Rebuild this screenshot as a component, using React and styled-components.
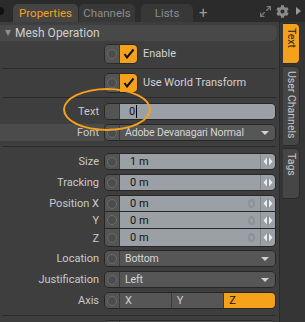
import React from "react"
import styled, { createGlobalStyle } from "styled-components"
import { Maximize2 } from "lucide-react"
import { FaCog } from "react-icons/fa"

const ORANGE = "#f4a11c"

const Global = createGlobalStyle`
  html, body {
    margin: 0;
    padding: 0;
    background: #3e3e3e;
    font-family: Roboto, "Liberation Sans", Arial, sans-serif;
    font-size: 11px;
  }
`

const Frame = styled.div`
  position: relative;
  width: 305px;
  height: 322px;
  overflow: hidden;
  display: flex;
  flex-direction: column;
  background: #3e3e3e;
`

const TabBar = styled.div`
  height: 22px;
  background: #2b2b2b;
  display: flex;
  align-items: flex-end;
  box-sizing: border-box;
  padding-right: 4px;
`

const Knob = styled.span`
  width: 8px;
  height: 8px;
  border-radius: 50%;
  background: #111;
  margin: 0 9px 7px -4px;
  align-self: flex-end;
`

const Tab = styled.div`
  width: ${({ $w }) => $w}px;
  height: 18px;
  box-sizing: border-box;
  margin-right: ${({ $gap }) => $gap}px;
  border-radius: 5px 5px 0 0;
  background: ${({ $active }) => ($active ? "#444444" : "#383838")};
  color: ${({ $active }) => ($active ? ORANGE : "#8c8c8c")};
  font-size: 11.5px;
  line-height: 18px;
  text-align: center;
  white-space: nowrap;
`

const Plus = styled.span`
  color: #9a9a9a;
  font-size: 15px;
  line-height: 18px;
  height: 18px;
  margin-left: 3px;
`

const Tools = styled.div`
  margin-left: auto;
  display: flex;
  align-items: center;
  gap: 4px;
  height: 22px;
  color: #8a8a8a;
`

const Arrow = styled.span`
  width: 0;
  height: 0;
  border-left: 5px solid #9a9a9a;
  border-top: 4px solid transparent;
  border-bottom: 4px solid transparent;
  margin-left: 3px;
`

const Body = styled.div`
  flex: 1;
  display: flex;
`

const Content = styled.div`
  position: relative;
  width: 279px;
  display: flex;
  flex-direction: column;
  background: #3e3e3e;
`

const Header = styled.div`
  margin: 3px 2px 0 0;
  height: 16px;
  background: #484848;
  border-radius: 0 6px 6px 0;
  display: flex;
  align-items: center;
  color: #cfcfcf;
  font-size: 12px;
`

const Tri = styled.span`
  width: 0;
  height: 0;
  border-top: 6px solid #8e8e8e;
  border-left: 3px solid transparent;
  border-right: 3px solid transparent;
  margin: 0 4px 0 5px;
`

const Rule = styled.div`
  height: 1px;
  background: #2a2a2a;
  margin: ${({ $m }) => $m};
  margin-left: 3px;
  margin-right: 3px;
`

const Row = styled.div`
  display: flex;
  align-items: center;
  height: ${({ $h }) => $h || 17}px;
  margin-top: ${({ $mt }) => $mt || 0}px;
  background: ${({ $hl }) => ($hl ? "linear-gradient(to right, #4b4b4b 104px, transparent 104px)" : "none")};
`

const Label = styled.div`
  width: 99px;
  padding-right: 5px;
  box-sizing: content-box;
  text-align: right;
  color: #cacaca;
  font-size: 11px;
  white-space: nowrap;
`

const Check = styled.div`
  display: flex;
  width: 32px;
  height: 18px;
  border: 1px solid #2a2a2a;
  border-radius: 5px;
  overflow: hidden;
  margin-left: 104px;
`

const CheckText = styled.span`
  color: #d2d2d2;
  font-size: 11px;
  margin-left: 5px;
  white-space: nowrap;
`

const Stub = styled.div`
  width: 14px;
  flex: none;
  background: #545454;
  border-right: 1px solid #3a3a3a;
  display: flex;
  align-items: center;
  justify-content: center;
`

const Dot = styled.span`
  width: 8px;
  height: 8px;
  border-radius: 50%;
  border: 1px solid #6b6b6b;
  background: #4c4c4c;
`

const CheckBox = styled.div`
  flex: 1;
  background: ${ORANGE};
  display: flex;
  align-items: center;
  justify-content: center;
`

const Field = styled.div`
  width: 172px;
  height: 100%;
  box-sizing: border-box;
  display: flex;
  border: 1px solid #262626;
  border-top-width: ${({ $part }) => ($part === "mid" || $part === "bot" ? 0 : 1)}px;
  border-radius: ${({ $part }) =>
    $part === "top" ? "5px 5px 0 0" : $part === "mid" ? "0" : $part === "bot" ? "0 0 5px 5px" : "5px"};
  overflow: hidden;
`

const Value = styled.div`
  flex: 1;
  min-width: 0;
  display: flex;
  align-items: center;
  padding-left: ${({ $pl }) => $pl || 10}px;
  background: ${({ $dark }) => ($dark ? "#565656" : "#9aa0a5")};
  color: ${({ $dark }) => ($dark ? "#d4d4d4" : "#141414")};
  font-size: ${({ $dark }) => ($dark ? 10.5 : 11)}px;
  letter-spacing: ${({ $dark }) => ($dark ? -0.15 : 0)}px;
  white-space: nowrap;
`

const Caret = styled.span`
  width: 1px;
  height: 13px;
  background: #000;
  margin-left: 1px;
`

const DropArrow = styled.span`
  margin-left: auto;
  margin-right: 6px;
  width: 0;
  height: 0;
  border-top: 4px solid #d0d0d0;
  border-left: 4px solid transparent;
  border-right: 4px solid transparent;
`

const Ghost = styled.span`
  margin-left: auto;
  margin-right: 5px;
  width: 7px;
  height: 9px;
  border-radius: 50%;
  border: 2px solid #8c9196;
  box-sizing: border-box;
`

const Spin = styled.div`
  width: 14px;
  flex: none;
  background: #9aa0a5;
  border-left: 1px solid #80868b;
  display: flex;
  align-items: center;
  justify-content: center;
`

const Seg = styled.div`
  flex: ${({ $w }) => $w};
  display: flex;
  align-items: center;
  padding-left: 5px;
  background: ${({ $on }) => ($on ? ORANGE : "#565656")};
  color: ${({ $on }) => ($on ? "#111" : "#cfcfcf")};
  border-left: ${({ $first }) => ($first ? "none" : "1px solid #3c3c3c")};
  font-size: 11px;
`

const Side = styled.div`
  flex: 1;
  background: #353535;
  border-left: 1px solid #2a2a2a;
  display: flex;
  flex-direction: column;
  padding: 1px 0 0 3px;
  gap: 2px;
`

const SideTab = styled.div`
  width: 17px;
  height: ${({ $h }) => $h}px;
  box-sizing: border-box;
  border: 1px solid #2a2a2a;
  border-left: none;
  border-radius: 0 5px 5px 0;
  background: ${({ $active }) => ($active ? ORANGE : "#464646")};
  color: ${({ $active }) => ($active ? "#222" : "#c6c6c6")};
  writing-mode: vertical-rl;
  font-size: 10.5px;
  white-space: nowrap;
  display: flex;
  align-items: center;
  padding-top: 4px;
`

const Halo = styled.div`
  position: absolute;
  left: 63px;
  top: 66px;
  width: 88px;
  height: 43px;
  border: 2px solid ${ORANGE};
  border-radius: 50%;
  box-sizing: border-box;
  pointer-events: none;
`

const Tick = () => (
  <svg width="12" height="11" viewBox="0 0 12 11">
    <path d="M1.5 6 L4 9.5 L10.5 1.5" fill="none" stroke="#111" strokeWidth="2" />
  </svg>
)

const Arrows = () => (
  <svg width="10" height="9" viewBox="0 0 10 9">
    <path d="M4 0.5 L0.5 4.5 L4 8.5 Z" fill="#eeeeee" />
    <path d="M6 0.5 L9.5 4.5 L6 8.5 Z" fill="#eeeeee" />
    <rect x="4.6" y="0" width="0.8" height="9" fill="#7a7f84" />
  </svg>
)

const Circle = () => (
  <Stub>
    <Dot />
  </Stub>
)

const NumRow = ({ label, value, part, ghost, mt, h }) => (
  <Row $mt={mt} $h={h}>
    <Label>{label}</Label>
    <Field $part={part}>
      <Circle />
      <Value>
        {value}
        {ghost && <Ghost />}
      </Value>
      <Spin>
        <Arrows />
      </Spin>
    </Field>
  </Row>
)

const DropRow = ({ label, value, mt, hl }) => (
  <Row $mt={mt} $hl={hl}>
    <Label>{label}</Label>
    <Field>
      <Circle />
      <Value $dark $pl={5}>
        {value}
        <DropArrow />
      </Value>
    </Field>
  </Row>
)

export default function App() {
  return (
    <Frame>
      <Global />
      <TabBar>
        <Knob />
        <Tab $active $w={65} $gap={1}>Properties</Tab>
        <Tab $w={56} $gap={6}>Channels</Tab>
        <Tab $w={52} $gap={3}>Lists</Tab>
        <Plus>+</Plus>
        <Tools>
          <Maximize2 size={13} strokeWidth={2.4} color="#7c7c7c" />
          <FaCog size={13} color="#8a8a8a" />
          <Arrow />
        </Tools>
      </TabBar>
      <Body>
        <Content>
          <Header>
            <Tri />
            Mesh Operation
          </Header>
          <Row $mt={3} $h={19}>
            <Check>
              <Circle />
              <CheckBox>
                <Tick />
              </CheckBox>
            </Check>
            <CheckText>Enable</CheckText>
          </Row>
          <Rule $m="5px 0 0" />
          <Row $mt={4} $h={19}>
            <Check>
              <Circle />
              <CheckBox>
                <Tick />
              </CheckBox>
            </Check>
            <CheckText>Use World Transform</CheckText>
          </Row>
          <Rule $m="5px 0 0" />
          <Row $mt={5}>
            <Label>Text</Label>
            <Field>
              <Stub />
              <Value $pl={9}>
                0<Caret />
              </Value>
            </Field>
          </Row>
          <DropRow label="Font" value="Adobe Devanagari Normal" mt={4} hl />
          <Rule $m="5px 0 0" />
          <NumRow label="Size" value="1 m" mt={6} />
          <NumRow label="Tracking" value="0 m" mt={4} />
          <NumRow label="Position X" value="0 m" part="top" ghost mt={4} />
          <NumRow label="Y" value="0 m" part="mid" ghost />
          <NumRow label="Z" value="0 m" part="bot" ghost h={18} />
          <DropRow label="Location" value="Bottom" mt={3} />
          <DropRow label="Justification" value="Left" mt={4} />
          <Row $mt={4}>
            <Label>Axis</Label>
            <Field>
              <Circle />
              <Seg $w={52} $first>X</Seg>
              <Seg $w={53}>Y</Seg>
              <Seg $w={52} $on>Z</Seg>
            </Field>
          </Row>
          <Rule $m="6px 0 0" />
          <Row $mt={4}>
            <Label />
            <Field>
              <Circle />
              <Value $dark />
            </Field>
          </Row>
          <Halo />
        </Content>
        <Side>
          <SideTab $active $h={41}>Text</SideTab>
          <SideTab $h={80}>User Channels</SideTab>
          <SideTab $h={51}>Tags</SideTab>
        </Side>
      </Body>
    </Frame>
  )
}
